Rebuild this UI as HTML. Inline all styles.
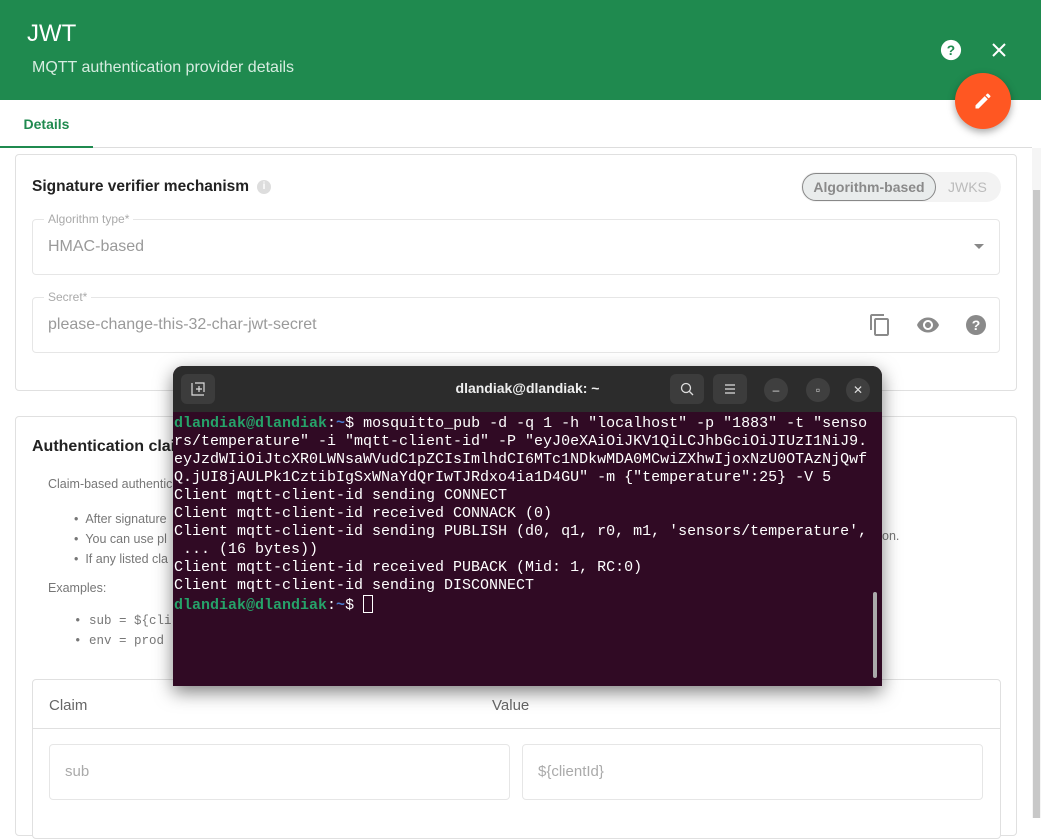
<!DOCTYPE html>
<html><head><meta charset="utf-8"><style>
*{box-sizing:border-box;margin:0;padding:0}
body{width:1041px;height:818px;overflow:hidden;background:#fff;font-family:"Liberation Sans",sans-serif;position:relative;color:#222}
.hdr{position:absolute;left:0;top:0;width:1041px;height:100px;background:#1f8a4f;color:#fff}
.hdr h1{position:absolute;left:27px;top:20px;font-size:24px;font-weight:normal}
.hdr .sub{position:absolute;left:32px;top:59px;font-size:16px;color:#d6ece0}
.abs{position:absolute}
.tabs{position:absolute;left:0;top:100px;width:1032px;height:48px;border-bottom:1px solid #ddd}
.tab{position:absolute;left:0;top:0;width:93px;height:48px;border-bottom:2px solid #1f8a4f;color:#1f8a4f;font-weight:bold;font-size:14px;text-align:center;line-height:48px}
.card{position:absolute;border:1px solid #e0e0e0;border-radius:4px;background:#fff}
.fld{position:absolute;border:1px solid #e6e6e6;border-radius:4px}
.lbl{position:absolute;font-size:12px;color:#aaa;background:#fff;padding:0 4px}
.val{position:absolute;font-size:16px;color:#9a9a9a}
.small{font-size:12.5px;color:#777}
.term{position:absolute;left:173px;top:366px;width:709px;height:320px;background:#300a24;border-radius:10px 10px 0 0;box-shadow:0 6px 18px rgba(0,0,0,.5);overflow:hidden}
.tbar{height:46px;background:#2c2c2c;position:relative;color:#eee}
.tb{position:absolute;top:8px;width:34px;height:30px;background:#3c3c3c;border-radius:6px}
.circ{position:absolute;top:12px;width:24px;height:24px;border-radius:50%;background:#3f3f3f;color:#ddd;font-size:12px;text-align:center;line-height:24px}
pre{font-family:"Liberation Mono",monospace;font-size:15px;line-height:18px;color:#fff;padding:3px 0 0 1px}
.g{color:#26a269;font-weight:bold}.b{font-weight:bold;color:#4a7bd0}
</style></head><body>
<div class="hdr"><h1>JWT</h1><div class="sub">MQTT authentication provider details</div>
<svg class="abs" style="left:940px;top:39px" width="22" height="22" viewBox="0 0 24 24"><circle cx="12" cy="12" r="11" fill="#fff"/><text x="12" y="17.5" text-anchor="middle" font-size="15" font-weight="bold" fill="#1f8a4f" font-family="Liberation Sans">?</text></svg>
<svg class="abs" style="left:991px;top:42px" width="16" height="16" viewBox="0 0 16 16"><path d="M2 2L14 14M14 2L2 14" stroke="#fff" stroke-width="2"/></svg>
</div>
<div class="abs" style="left:955px;top:73px;width:56px;height:56px;border-radius:50%;background:#ff5722;box-shadow:0 3px 8px rgba(0,0,0,.35)"><svg style="position:absolute;left:18px;top:18px" width="20" height="20" viewBox="0 0 24 24"><path d="M3 17.25V21h3.75L17.81 9.94l-3.75-3.75L3 17.25zM20.71 7.04a1 1 0 000-1.41l-2.34-2.34a1 1 0 00-1.41 0l-1.83 1.83 3.75 3.75 1.83-1.83z" fill="#fff"/></svg></div>
<div class="tabs"><div class="tab">Details</div></div>
<div class="abs" style="left:1032px;top:148px;width:9px;height:670px;background:#f5f5f5"></div>
<div class="abs" style="left:1033px;top:190px;width:7px;height:628px;background:#c8c8c8"></div>

<div class="card" style="left:15px;top:154px;width:1002px;height:237px">
<div class="abs" style="left:16px;top:23px;font-size:15.5px;font-weight:bold;color:#222">Signature verifier mechanism</div>
<div class="abs" style="left:241px;top:25px;width:14px;height:14px;border-radius:50%;background:#ddd;color:#fff;font-size:10px;text-align:center;line-height:14px;font-weight:bold">i</div>
<div class="abs" style="left:785px;top:17px;width:200px;height:30px;border-radius:15px;background:#f3f3f3"></div>
<div class="abs" style="left:786px;top:18px;width:134px;height:28px;border-radius:14px;border:1px solid #888;background:#e9ecec;font-size:14px;font-weight:bold;color:#8a8a8a;text-align:center;line-height:26px">Algorithm-based</div>
<div class="abs" style="left:932px;top:24px;font-size:14px;color:#bbb">JWKS</div>
<div class="fld" style="left:16px;top:64px;width:968px;height:56px"></div>
<div class="lbl" style="left:28px;top:57px">Algorithm type*</div>
<div class="val" style="left:32px;top:83px">HMAC-based</div>
<div class="abs" style="left:958px;top:89px;width:0;height:0;border-left:5px solid transparent;border-right:5px solid transparent;border-top:5px solid #888"></div>
<div class="fld" style="left:16px;top:142px;width:968px;height:56px"></div>
<div class="lbl" style="left:28px;top:135px">Secret*</div>
<div class="val" style="left:32px;top:161px">please-change-this-32-char-jwt-secret</div>
<svg class="abs" style="left:852px;top:158px" width="24" height="24" viewBox="0 0 24 24"><path d="M16 1H4c-1.1 0-2 .9-2 2v14h2V3h12V1zm3 4H8c-1.1 0-2 .9-2 2v14c0 1.1.9 2 2 2h11c1.1 0 2-.9 2-2V7c0-1.1-.9-2-2-2zm0 16H8V7h11v14z" fill="#8a8a8a"/></svg>
<svg class="abs" style="left:900px;top:158px" width="24" height="24" viewBox="0 0 24 24"><path d="M12 4.5C7 4.5 2.730 7.61 1 12c1.73 4.39 6 7.5 11 7.5s9.27-3.11 11-7.5c-1.73-4.390-6-7.5-11-7.5zM12 17c-2.76 0-5-2.24-5-5s2.24-5 5-5 5 2.24 5 5-2.24 5-5 5zm0-8c-1.66 0-3 1.34-3 3s1.34 3 3 3 3-1.34 3-3-1.34-3-3-3z" fill="#8a8a8a"/></svg>
<svg class="abs" style="left:948px;top:158px" width="24" height="24" viewBox="0 0 24 24"><circle cx="12" cy="12" r="10" fill="#8a8a8a"/><text x="12" y="17" text-anchor="middle" font-size="14" font-weight="bold" fill="#fff" font-family="Liberation Sans">?</text></svg>
</div>

<div class="card" style="left:15px;top:416px;width:1002px;height:420px">
<div class="abs" style="left:16px;top:21px;font-size:16px;font-weight:bold;color:#222">Authentication claims</div>
<div class="abs small" style="left:32px;top:60px">Claim-based authentication</div>
<div class="abs small" style="left:58px;top:92px;line-height:20px">• &nbsp;After signature<br>• &nbsp;You can use pl<br>• &nbsp;If any listed cla</div>
<div class="abs small" style="left:866px;top:112px">on.</div>
<div class="abs small" style="left:32px;top:164px">Examples:</div>
<div class="abs small" style="left:58px;top:194px;line-height:20px;font-family:'Liberation Mono',monospace">• sub = ${cli<br>• env = prod -</div>
<div class="card" style="left:16px;top:262px;width:969px;height:160px">
<div class="abs" style="left:16px;top:17px;font-size:15px;color:#666">Claim</div>
<div class="abs" style="left:459px;top:17px;font-size:15px;color:#666">Value</div>
<div class="abs" style="left:0;top:48px;width:967px;border-top:1px solid #e0e0e0"></div>
<div class="fld" style="left:16px;top:64px;width:461px;height:56px"></div>
<div class="val" style="left:32px;top:83px;font-size:15px;color:#aaa">sub</div>
<div class="fld" style="left:489px;top:64px;width:461px;height:56px"></div>
<div class="val" style="left:505px;top:83px;font-size:15px;color:#aaa">${clientId}</div>
</div>
</div>

<div class="term">
<div class="tbar">
<div class="tb" style="left:8px"><svg style="position:absolute;left:10px;top:8px" width="14" height="14" viewBox="0 0 14 14"><path d="M1 1v12h12M4 1h9v9M8 4v6M5 7h6" stroke="#ddd" fill="none" stroke-width="1.2"/></svg></div>
<div class="abs" style="left:0;width:709px;top:14px;text-align:center;font-size:14px;font-weight:bold;color:#eee">dlandiak@dlandiak: ~</div>
<div class="tb" style="left:497px"><svg style="position:absolute;left:10px;top:8px" width="14" height="14" viewBox="0 0 14 14"><circle cx="6" cy="6" r="4.5" stroke="#ddd" fill="none" stroke-width="1.3"/><path d="M9.5 9.5L13 13" stroke="#ddd" stroke-width="1.3"/></svg></div>
<div class="tb" style="left:540px"><svg style="position:absolute;left:11px;top:9px" width="12" height="12" viewBox="0 0 12 12"><path d="M1 2h10M1 6h10M1 10h10" stroke="#ddd" stroke-width="1.2"/></svg></div>
<div class="circ" style="left:591px">–</div>
<div class="circ" style="left:633px">▫</div>
<div class="circ" style="left:673px">✕</div>
</div>
<pre><span class="g">dlandiak@dlandiak</span>:<span class="b">~</span>$ mosquitto_pub -d -q 1 -h "localhost" -p "1883" -t "senso
rs/temperature" -i "mqtt-client-id" -P "eyJ0eXAiOiJKV1QiLCJhbGciOiJIUzI1NiJ9.
eyJzdWIiOiJtcXR0LWNsaWVudC1pZCIsImlhdCI6MTc1NDkwMDA0MCwiZXhwIjoxNzU0OTAzNjQwf
Q.jUI8jAULPk1CztibIgSxWNaYdQrIwTJRdxo4ia1D4GU" -m {"temperature":25} -V 5
Client mqtt-client-id sending CONNECT
Client mqtt-client-id received CONNACK (0)
Client mqtt-client-id sending PUBLISH (d0, q1, r0, m1, 'sensors/temperature',
 ... (16 bytes))
Client mqtt-client-id received PUBACK (Mid: 1, RC:0)
Client mqtt-client-id sending DISCONNECT
<span class="g">dlandiak@dlandiak</span>:<span class="b">~</span>$ <span style="display:inline-block;width:10px;height:18px;border:1px solid #fff;vertical-align:-4px"></span></pre>
<div class="abs" style="left:700px;top:226px;width:4px;height:86px;background:#aaa;border-radius:2px"></div>
</div>
</body></html>
